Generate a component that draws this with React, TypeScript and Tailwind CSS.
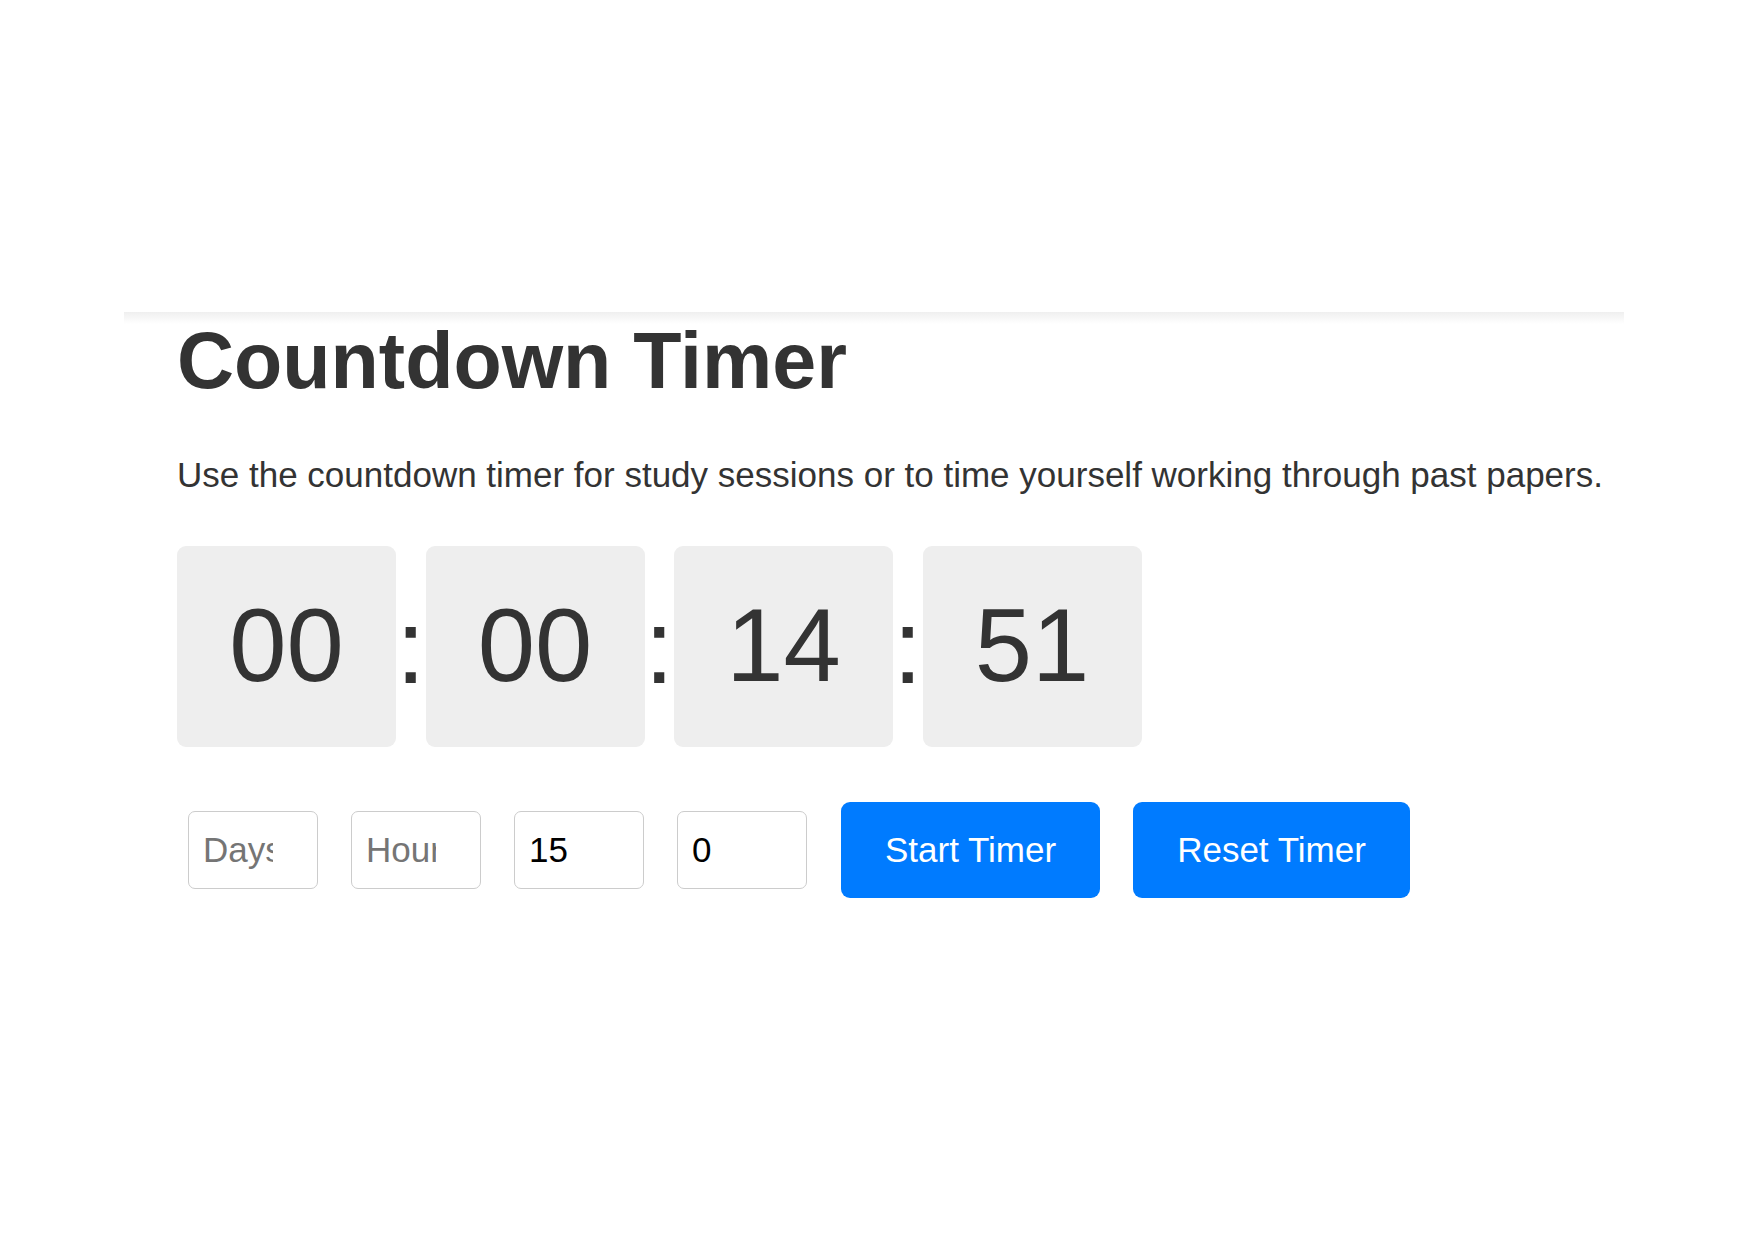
import React from "react";

const font = { fontFamily: '"Liberation Sans", Arial, Helvetica, sans-serif' };

function TimeBox({ value }: { value: string }) {
  return (
    <div className="flex h-[201px] w-[219px] items-center justify-center rounded-[9px] bg-[#eeeeee] text-[103px] text-[#333333]">
      {value}
    </div>
  );
}

function Colon() {
  return <span className="w-[29.5px] text-center text-[106px] text-[#333333]">:</span>;
}

function NumberField({ placeholder, value }: { placeholder: string; value?: string }) {
  return (
    <input
      type="text"
      placeholder={placeholder}
      defaultValue={value}
      className="h-[78px] w-[130px] rounded-[7px] border border-[#cccccc] bg-white pl-[14px] pr-[44px] text-[35px] text-black outline-none placeholder:text-[#757575]"
      style={font}
    />
  );
}

export default function App() {
  const [parts] = React.useState(["00", "00", "14", "51"]);

  return (
    <div className="min-h-[1240px] w-full bg-white pt-[312px]" style={font}>
      <div className="mx-auto w-[1500px]">
        <div className="h-[12px] bg-gradient-to-b from-[#efefef] to-white" />
        <div className="px-[53px]">
          <h1 className="text-[79px] font-bold leading-[74px] text-[#333333]">Countdown Timer</h1>
          <p className="mt-[57px] whitespace-nowrap text-[35px] leading-[40px] text-[#333333]">
            Use the countdown timer for study sessions or to time yourself working through past papers.
          </p>

          <div className="mt-[51px] flex items-center">
            <TimeBox value={parts[0]} />
            <Colon />
            <TimeBox value={parts[1]} />
            <Colon />
            <TimeBox value={parts[2]} />
            <Colon />
            <TimeBox value={parts[3]} />
          </div>

          <div className="mt-[55px] flex items-center gap-[33px] pl-[11px]">
            <NumberField placeholder="Days" />
            <NumberField placeholder="Hours" />
            <NumberField placeholder="Minutes" value="15" />
            <NumberField placeholder="Seconds" value="0" />
            <button className="ml-px rounded-[9px] bg-[#007bff] px-[44px] py-[28px] text-[35px] leading-[40px] text-white">
              Start Timer
            </button>
            <button className="rounded-[9px] bg-[#007bff] px-[44px] py-[28px] text-[35px] leading-[40px] text-white">
              Reset Timer
            </button>
          </div>
        </div>
      </div>
    </div>
  );
}
